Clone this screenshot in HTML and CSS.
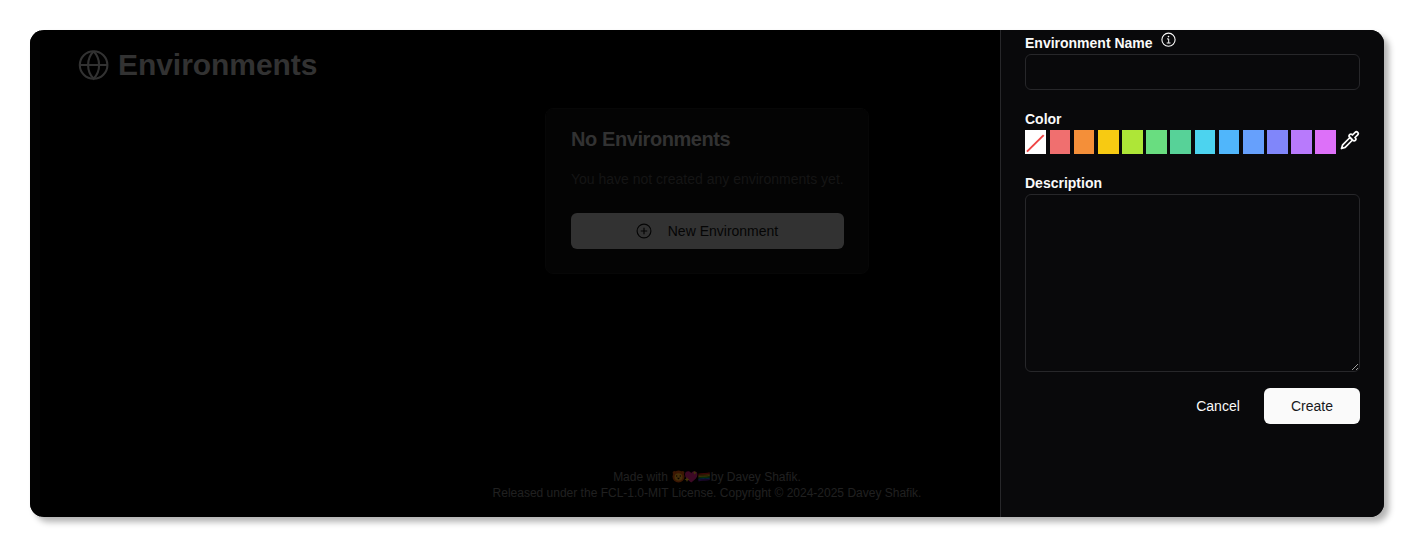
FILE: index.html
```html
<!DOCTYPE html>
<html lang="en">
<head>
<meta charset="utf-8">
<title>Environments</title>
<link rel="stylesheet" href="styles.css">
</head>
<body>
<div class="window">
  <div class="rail"></div>
  <main class="main">
    <header class="heading">
      <svg class="globe" viewBox="0 0 32 32" fill="none" stroke="currentColor" stroke-width="2.1"><circle cx="16.6" cy="16" r="13.8"/><path d="M16.6 2.2a20 20 0 0 0 0 27.6 20 20 0 0 0 0-27.6M2.8 16h27.6"/></svg>
      <h1 class="title">Environments</h1>
    </header>
    <section class="card">
      <h2 class="card-title">No Environments</h2>
      <p class="card-text">You have not created any environments yet.</p>
      <button class="new-button">
        <svg class="plus" viewBox="0 0 16 16" fill="none" stroke="currentColor" stroke-width="1.15"><circle cx="8" cy="8" r="6.9"/><path d="M8 4.8v6.4M4.8 8h6.4"/></svg>
        <span class="new-label">New Environment</span>
      </button>
    </section>
    <footer class="footer">
      <p class="made"><span class="made-with">Made with</span>
        <svg class="emoji" viewBox="0 0 39 13">
          <circle cx="6.5" cy="6.5" r="6" fill="#3c1703"/><circle cx="2.4" cy="2.8" r="1.8" fill="#3c1703"/><circle cx="10.6" cy="2.8" r="1.8" fill="#3c1703"/><ellipse cx="6.5" cy="7" rx="4" ry="3.8" fill="#47300a"/><circle cx="4.7" cy="6" r=".7" fill="#080402"/><circle cx="8.3" cy="6" r=".7" fill="#080402"/><path d="M5 7.8h3L6.5 9.6z" fill="#080402"/>
          <path d="M19.2 12.5C15.5 9.7 13 7.4 13 4.4c0-3.6 4.5-4.3 6.2-1.2 1.7-3.1 6.2-2.4 6.2 1.2 0 3-2.5 5.3-6.2 8.1z" fill="#3d0925"/><path d="m15 7 .8 1.7 1.7.8-1.7.8L15 12l-.8-1.7-1.7-.8 1.7-.8zM22.8.8l.6 1.4 1.4.6-1.4.6-.6 1.4-.6-1.4-1.4-.6 1.4-.6z" fill="#45360b"/>
          <g fill="none" stroke-width="1.4"><path d="M26.4 4.4c4-1.8 7 .2 11.4-1.5" stroke="#3a0606"/><path d="M26.4 5.7c4-1.8 7 .2 11.4-1.5" stroke="#3b1d04"/><path d="M26.4 7c4-1.8 7 .2 11.4-1.5" stroke="#383105"/><path d="M26.4 8.3c4-1.8 7 .2 11.4-1.5" stroke="#062c0c"/><path d="M26.4 9.6c4-1.8 7 .2 11.4-1.5" stroke="#061e3a"/><path d="M26.4 10.8c4-1.8 7 .2 11.4-1.5" stroke="#1a072b"/></g>
        </svg><span class="made-by">by Davey Shafik.</span></p>
      <p class="license">Released under the FCL-1.0-MIT License. Copyright © 2024-2025 Davey Shafik.</p>
    </footer>
  </main>
  <aside class="panel">
    <div class="label-row">
      <label class="label name-label" for="name">Environment Name</label>
      <svg class="info" viewBox="0 0 16 16" fill="none" stroke="currentColor"><circle cx="7.5" cy="7.7" r="6.6" stroke-width="1.1"/><path d="M6 6.9h1.7v4M5.7 11h3.8" stroke-width="1"/><circle cx="7.5" cy="4.6" r=".8" fill="currentColor" stroke="none"/></svg>
    </div>
    <input class="field" id="name">
    <div class="label color-label">Color</div>
    <div class="colors">
      <span class="swatch none"><svg class="slash" viewBox="0 0 21 24"><path d="M2 21.8 19 5" stroke="#ef4444" stroke-width="2"/></svg></span>
      <span class="swatch red"></span><span class="swatch orange"></span><span class="swatch yellow"></span><span class="swatch lime"></span><span class="swatch green"></span><span class="swatch emerald"></span><span class="swatch cyan"></span><span class="swatch sky"></span><span class="swatch blue"></span><span class="swatch indigo"></span><span class="swatch purple"></span><span class="swatch fuchsia"></span>
      <svg class="dropper" viewBox="0 0 24 24" fill="none" stroke="currentColor" stroke-width="2.1" stroke-linejoin="round"><path d="m1.8 22.2 1.4-4.4L12 9l3 3-8.8 8.8z"/><path d="m15 6 3.2-3.2a2.1 2.1 0 0 1 3 3L18 9l.4.4a2.1 2.1 0 1 1-3 3l-3.8-3.8a2.1 2.1 0 1 1 3-3l.4.4Z"/></svg>
    </div>
    <label class="label description-label" for="description">Description</label>
    <textarea class="field area" id="description"></textarea>
    <div class="actions">
      <button class="cancel">Cancel</button>
      <button class="create">Create</button>
    </div>
  </aside>
</div>
</body>
</html>
```
FILE: styles.css
```css
* { box-sizing: border-box; }
body { margin: 0; padding: 30px 42px 42px 30px; background: #fff; font: 14px/20px "Liberation Sans", Arial, sans-serif; overflow: hidden; }
h1, h2, p { margin: 0; }
button { font: inherit; border: 0; padding: 0; }
svg { display: block; flex: none; }
.window { display: flex; width: 1354px; height: 487px; border-radius: 14px; overflow: hidden; background: #000; box-shadow: 5px 5px 6px rgba(0, 0, 0, .3); }
.rail { width: 10px; background: #020202; }
.main { width: 960px; display: flex; flex-direction: column; color: #323232; }
.heading { display: flex; align-items: center; gap: 9px; height: 36px; margin: 17px 0 0 37px; }
.globe { width: 32px; height: 32px; }
.title { font-size: 30px; line-height: 36px; font-weight: 700; letter-spacing: -.05px; }
.card { width: 324px; height: 166px; margin: 25px 0 0 505px; padding: 19px 25px; border: 1px solid #070707; border-radius: 8px; background: #040404; }
.card-title { font-size: 20px; line-height: 22px; letter-spacing: -.42px; }
.card-text { margin-top: 19px; color: #151515; white-space: nowrap; }
.new-button { display: flex; align-items: center; justify-content: center; gap: 16px; width: 273px; height: 36px; margin: 23.5px 0 0 -.5px; border-radius: 6px; background: #323232; color: #050505; }
.plus { width: 16px; height: 16px; }
.footer { margin: auto 0 16px 334px; width: 666px; font-size: 12px; line-height: 16px; color: #202020; text-align: center; }
.made { display: flex; justify-content: center; }
.emoji { width: 39px; height: 13px; margin: 1px 0 0 4px; }
.panel { width: 384px; padding: 0 24px; display: flex; flex-direction: column; border-left: 1px solid #27272a; background: #09090b; color: #fafafa; }
.label { font-weight: 700; line-height: 20px; }
.label-row { display: flex; gap: 8px; height: 24px; padding-top: 2px; }
.name-label { padding-top: 1px; }
.info { width: 16px; height: 16px; }
.field { display: block; width: 335px; height: 36px; margin: 0; padding: 8px; border: 1px solid #27272a; border-radius: 6px; background: transparent; color: #fafafa; font: inherit; outline: 0; }
.color-label { margin-top: 19px; }
.colors { display: flex; gap: 3.54px; height: 24px; margin-top: 1px; padding-left: .4px; }
.swatch { flex: none; width: 20.65px; height: 24px; }
.slash { width: 20.65px; height: 24px; }
.none { background: #fff; }
.red { background: #f06f6f; }
.orange { background: #f48f39; }
.yellow { background: #f7ca12; }
.lime { background: #aee637; }
.green { background: #69dd80; }
.emerald { background: #57d298; }
.cyan { background: #4cd3ef; }
.sky { background: #50b6fb; }
.blue { background: #66a0fc; }
.indigo { background: #8086fa; }
.purple { background: #b87afc; }
.fuchsia { background: #dd70f9; }
.dropper { width: 20px; height: 20px; margin-left: .3px; }
.description-label { margin-top: 19px; }
.area { height: 178px; margin-top: 1px; resize: vertical; }
.actions { display: flex; justify-content: flex-end; gap: 8px; margin-top: 16px; }
.cancel { width: 76px; height: 36px; background: transparent; color: #fafafa; }
.create { width: 96px; height: 36px; border-radius: 6px; background: #fafafa; color: #18181b; }
```
